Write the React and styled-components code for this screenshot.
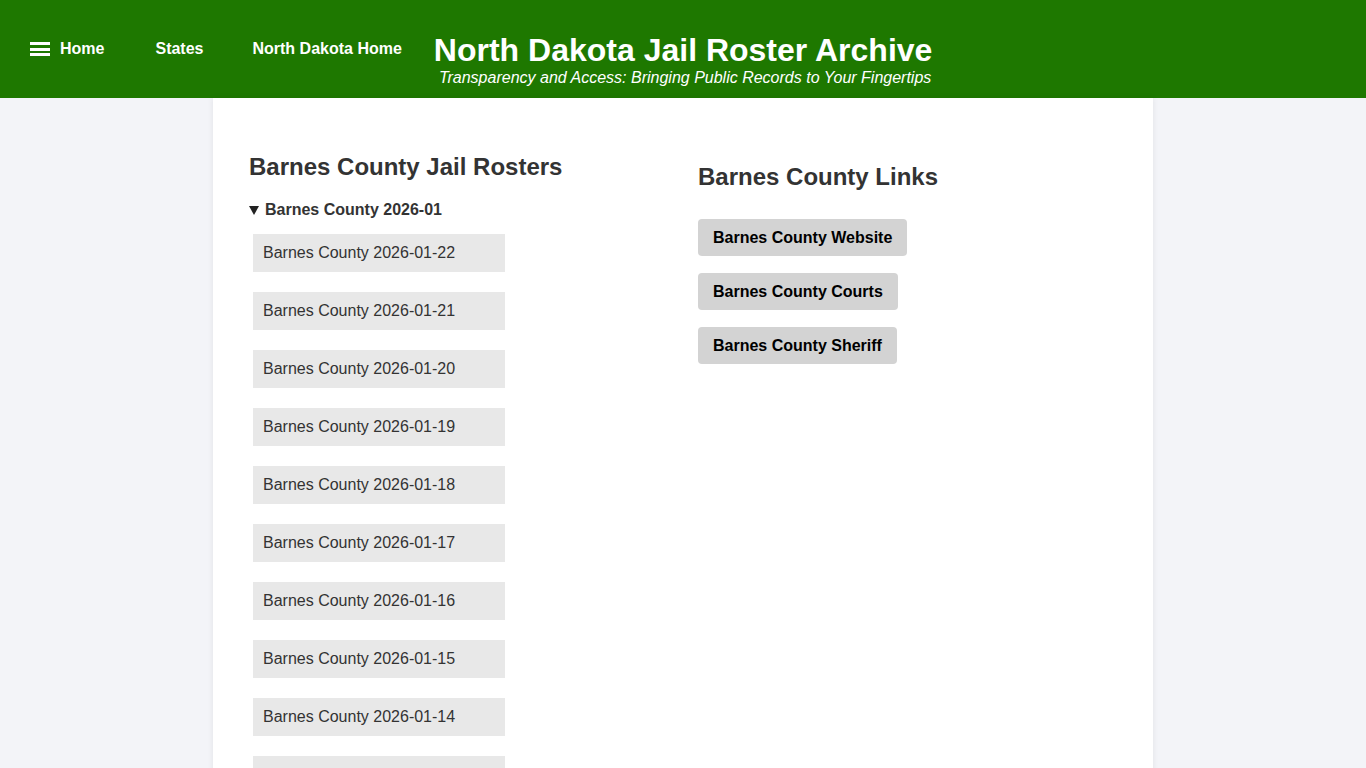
import React from "react";
import styled, { createGlobalStyle } from "styled-components";

const Global = createGlobalStyle`
  html, body { margin: 0; padding: 0; }
  body {
    background: #f3f4f8;
    font-family: "Liberation Sans", Arial, sans-serif;
    color: #333;
  }
`;

const Header = styled.header`
  background: #1e7800;
  height: 98px;
  display: flex;
  align-items: center;
  padding-left: 30px;
  box-sizing: border-box;
  color: #fff;
`;

const Nav = styled.nav`
  display: flex;
  align-items: center;
`;

const NavLink = styled.a`
  color: #fff;
  font-weight: bold;
  font-size: 16px;
  text-decoration: none;
  display: flex;
  align-items: center;
  margin-right: ${(p) => p.$mr || 50}px;
`;

const Burger = styled.span`
  display: inline-flex;
  flex-direction: column;
  justify-content: space-between;
  width: 20px;
  height: 14px;
  margin-right: 10px;
  span {
    display: block;
    height: 3px;
    background: #fff;
  }
`;

const TitleBlock = styled.div`
  display: flex;
  flex-direction: column;
  align-items: center;
  padding-top: 21px;
`;

const Title = styled.h1`
  margin: 0;
  font-size: 32px;
  line-height: 36px;
  font-weight: bold;
`;

const Subtitle = styled.div`
  font-style: italic;
  font-size: 16px;
  line-height: 20px;
  margin-top: 0;
  padding-left: 4px;
`;

const Card = styled.main`
  width: 940px;
  margin: 0 auto;
  background: #fff;
  border-radius: 0 0 6px 6px;
  box-shadow: 0 0 6px rgba(0, 0, 0, 0.08);
  padding: 0 36px 40px;
  box-sizing: border-box;
  display: grid;
  grid-template-columns: 449px 1fr;
`;

const Column = styled.section`
  padding-top: ${(p) => p.$pt}px;
`;

const H2 = styled.h2`
  margin: 0;
  font-size: 24px;
  line-height: 28px;
  font-weight: bold;
  color: #333;
`;

const Details = styled.details`
  margin-top: 20px;
`;

const Summary = styled.summary`
  font-weight: bold;
  font-size: 16px;
  line-height: 18px;
  cursor: pointer;
  list-style: none;
  display: flex;
  align-items: center;
  &::-webkit-details-marker { display: none; }
  &::before {
    content: "";
    width: 0;
    height: 0;
    border-left: 5px solid transparent;
    border-right: 5px solid transparent;
    border-top: 9px solid #222;
    margin-right: 6px;
  }
`;

const List = styled.ul`
  list-style: none;
  margin: 15px 0 0 4px;
  padding: 0;
  display: flex;
  flex-direction: column;
  gap: 20px;
`;

const Item = styled.li`
  width: 252px;
  height: 38px;
  box-sizing: border-box;
  background: #e8e8e8;
  display: flex;
  align-items: center;
  padding-left: 10px;
  font-size: 16px;
  color: #333;
`;

const Buttons = styled.div`
  margin-top: 28px;
  display: flex;
  flex-direction: column;
  align-items: flex-start;
  gap: 17px;
`;

const LinkButton = styled.a`
  display: inline-flex;
  align-items: center;
  height: 37px;
  padding: 0 15px;
  box-sizing: border-box;
  background: #d3d3d3;
  border-radius: 4px;
  color: #000;
  font-weight: bold;
  font-size: 16px;
  text-decoration: none;
`;

const dates = Array.from({ length: 22 }, (_, i) => String(22 - i).padStart(2, "0"));

export default function App() {
  return (
    <>
      <Global />
      <Header>
        <Nav>
          <NavLink href="#" $mr={51}>
            <Burger>
              <span />
              <span />
              <span />
            </Burger>
            Home
          </NavLink>
          <NavLink href="#" $mr={49}>States</NavLink>
          <NavLink href="#" $mr={32}>North Dakota Home</NavLink>
        </Nav>
        <TitleBlock>
          <Title>North Dakota Jail Roster Archive</Title>
          <Subtitle>Transparency and Access: Bringing Public Records to Your Fingertips</Subtitle>
        </TitleBlock>
      </Header>
      <Card>
        <Column $pt={55}>
          <H2>Barnes County Jail Rosters</H2>
          <Details open>
            <Summary>Barnes County 2026-01</Summary>
            <List>
              {dates.map((d) => (
                <Item key={d}>Barnes County 2026-01-{d}</Item>
              ))}
            </List>
          </Details>
        </Column>
        <Column $pt={65}>
          <H2>Barnes County Links</H2>
          <Buttons>
            <LinkButton href="#">Barnes County Website</LinkButton>
            <LinkButton href="#">Barnes County Courts</LinkButton>
            <LinkButton href="#">Barnes County Sheriff</LinkButton>
          </Buttons>
        </Column>
      </Card>
    </>
  );
}
